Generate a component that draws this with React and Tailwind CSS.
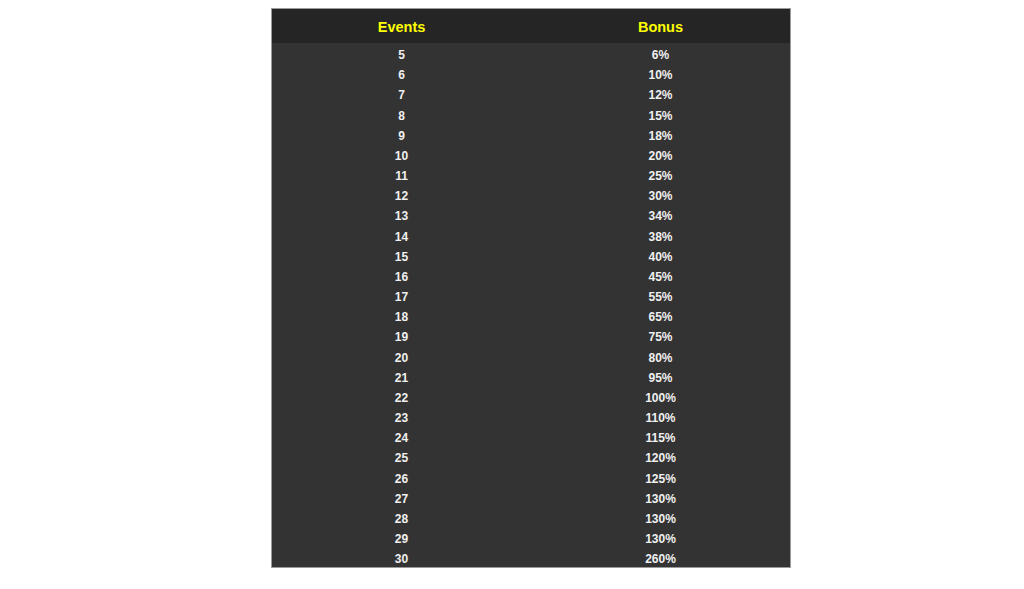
import React from "react";

// events needed and bonus given
const rows = [
  [5, "6%"],
  [6, "10%"],
  [7, "12%"],
  [8, "15%"],
  [9, "18%"],
  [10, "20%"],
  [11, "25%"],
  [12, "30%"],
  [13, "34%"],
  [14, "38%"],
  [15, "40%"],
  [16, "45%"],
  [17, "55%"],
  [18, "65%"],
  [19, "75%"],
  [20, "80%"],
  [21, "95%"],
  [22, "100%"],
  [23, "110%"],
  [24, "115%"],
  [25, "120%"],
  [26, "125%"],
  [27, "130%"],
  [28, "130%"],
  [29, "130%"],
  [30, "260%"],
];

const App = () => {
  return (
    <div className="min-h-[589px] bg-white pt-[8px] pl-[271px] font-['Liberation_Sans',Arial,sans-serif]">
      <div className="w-[520px] border border-[#9a9a9a] bg-[#333333]">
        {/* header */}
        <div className="grid grid-cols-2 h-[34px] items-center pt-[4px] bg-[#252525] text-[14.5px] font-bold text-[#ffff00]">
          <div className="text-center">Events</div>
          <div className="text-center">Bonus</div>
        </div>

        {/* rows */}
        <div className="flex flex-col">
          {rows.map(([events, bonus]) => (
            <div
              key={events}
              className="grid grid-cols-2 h-[20.18px] items-center pt-[3px] text-[12px] font-bold text-[#f0f0f0]"
            >
              <div className="text-center">{events}</div>
              <div className="text-center">{bonus}</div>
            </div>
          ))}
        </div>
      </div>
    </div>
  );
};

export default App;
